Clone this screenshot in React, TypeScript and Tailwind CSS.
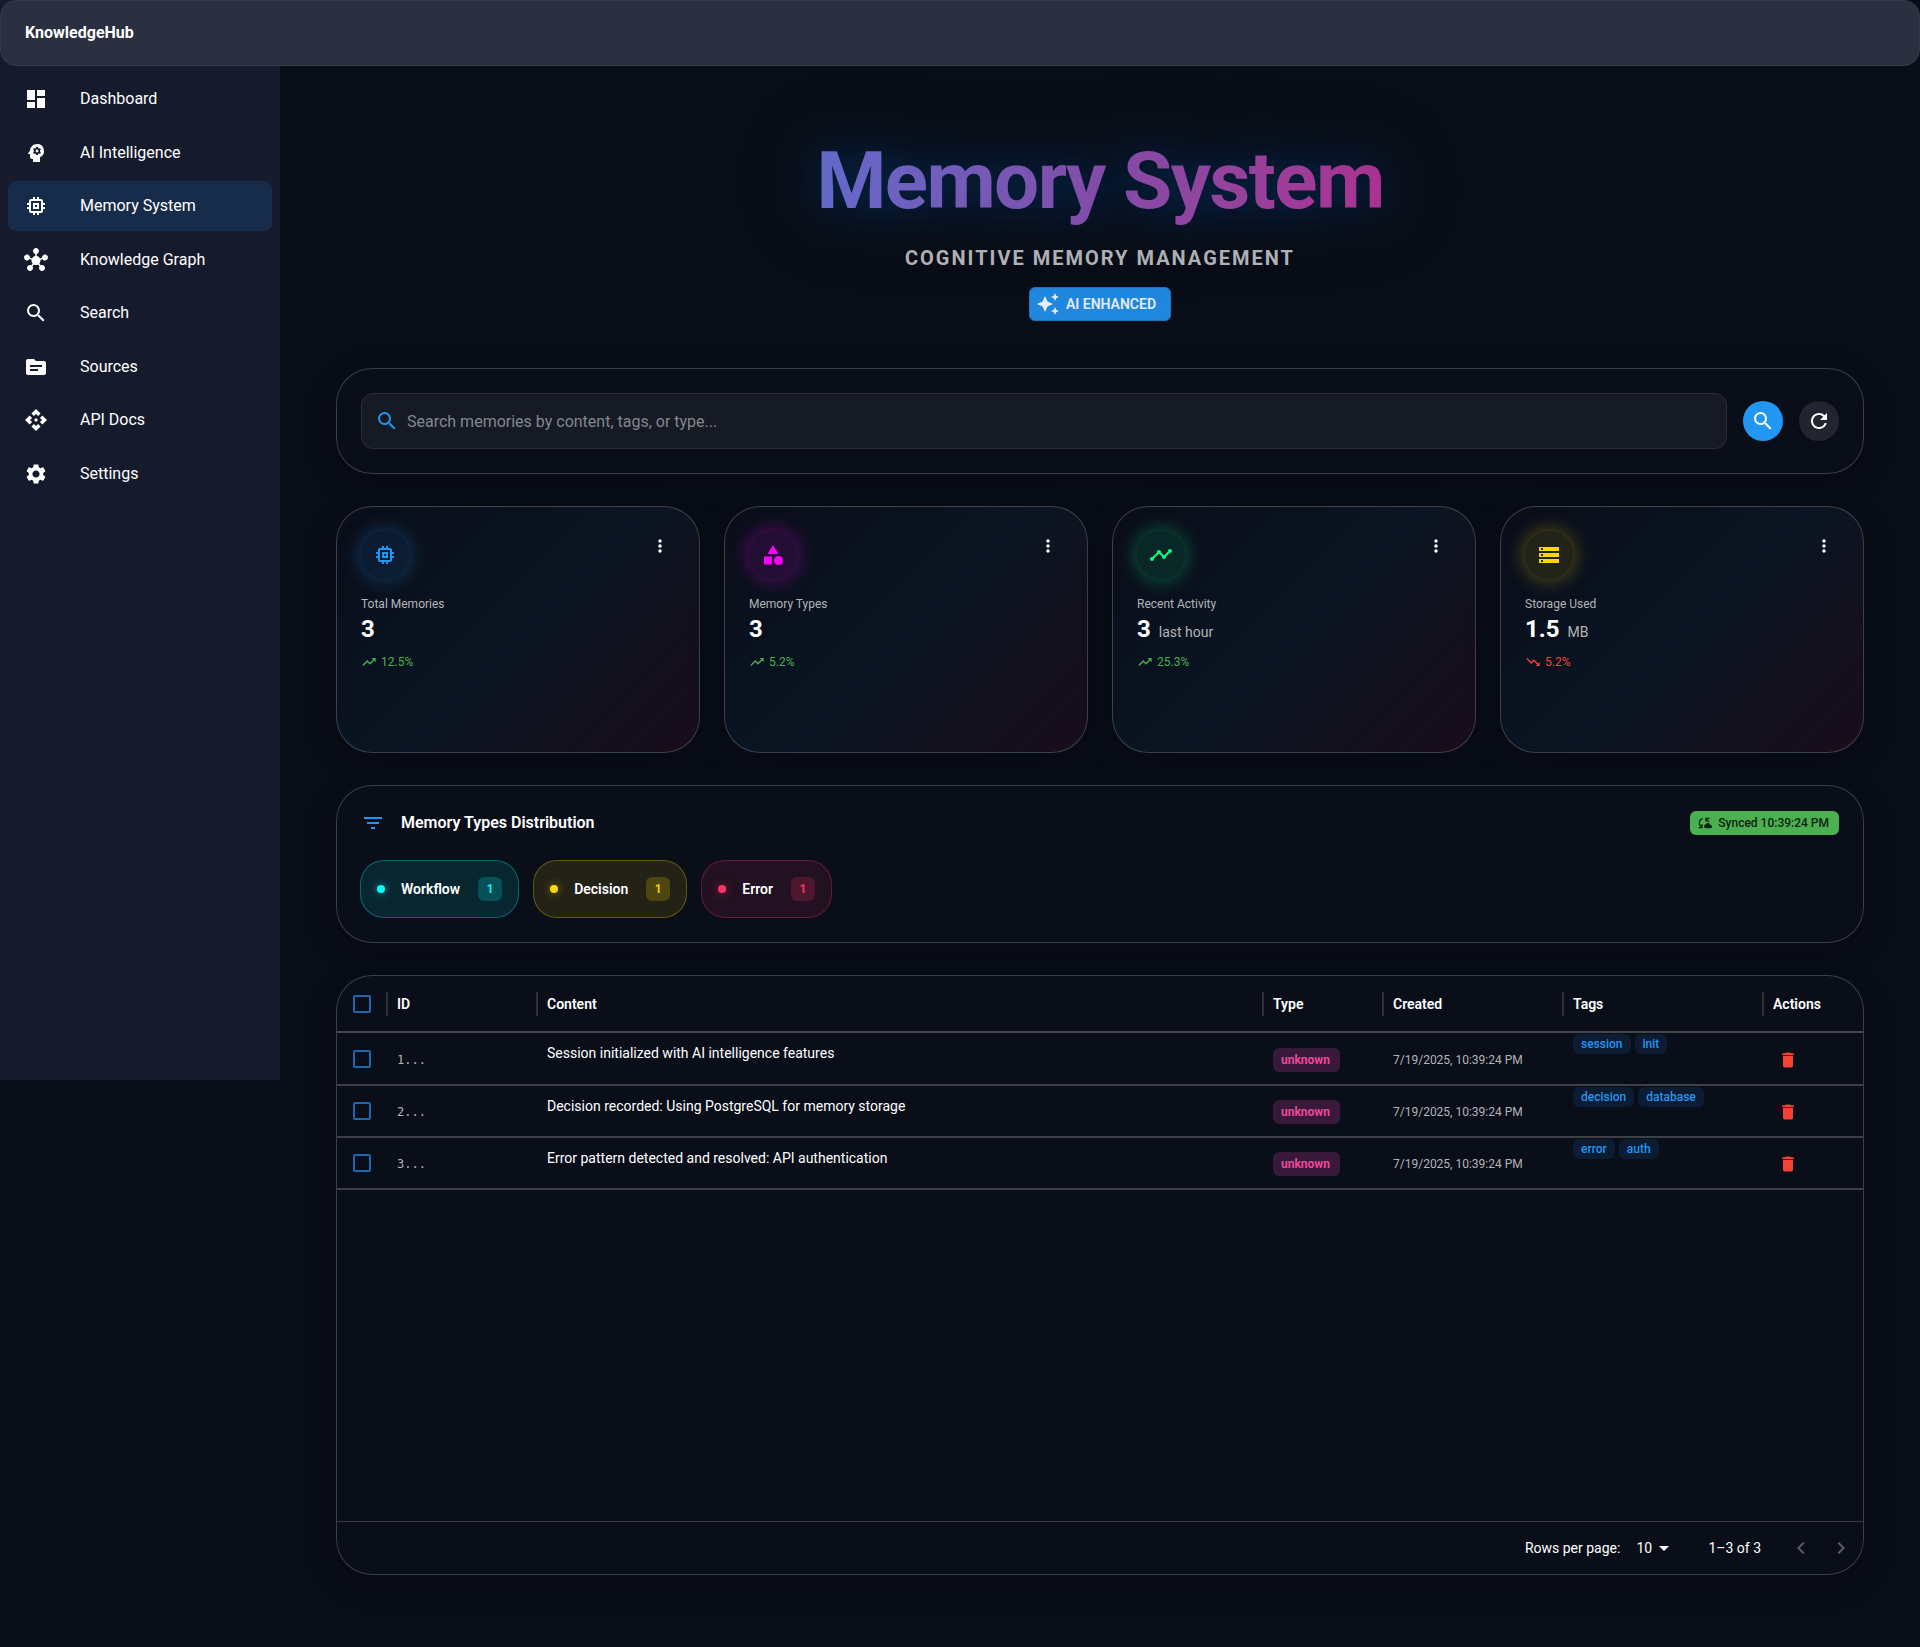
import React from "react";
import {
  MdApi,
  MdArrowDropDown,
  MdAutoAwesome,
  MdCategory,
  MdCloudSync,
  MdDashboard,
  MdDelete,
  MdFilterList,
  MdHub,
  MdKeyboardArrowLeft,
  MdKeyboardArrowRight,
  MdMemory,
  MdMoreVert,
  MdPsychology,
  MdRefresh,
  MdSearch,
  MdSettings,
  MdSource,
  MdStorage,
  MdTimeline,
  MdTrendingDown,
  MdTrendingUp,
} from "react-icons/md";

const navItems = [
  { label: "Dashboard", Icon: MdDashboard },
  { label: "AI Intelligence", Icon: MdPsychology },
  { label: "Memory System", Icon: MdMemory, active: true },
  { label: "Knowledge Graph", Icon: MdHub },
  { label: "Search", Icon: MdSearch },
  { label: "Sources", Icon: MdSource },
  { label: "API Docs", Icon: MdApi },
  { label: "Settings", Icon: MdSettings },
];

const stats = [
  {
    label: "Total Memories",
    value: "3",
    unit: "",
    trend: "12.5%",
    up: true,
    Icon: MdMemory,
    tone: "text-[#2196f3] bg-[#2196f3]/10 shadow-[0_0_20px_rgba(33,150,243,0.38)]",
  },
  {
    label: "Memory Types",
    value: "3",
    unit: "",
    trend: "5.2%",
    up: true,
    Icon: MdCategory,
    tone: "text-[#ff00ff] bg-[#ff00ff]/10 shadow-[0_0_20px_rgba(255,0,255,0.38)]",
  },
  {
    label: "Recent Activity",
    value: "3",
    unit: "last hour",
    trend: "25.3%",
    up: true,
    Icon: MdTimeline,
    tone: "text-[#00ff88] bg-[#00ff88]/10 shadow-[0_0_20px_rgba(0,255,136,0.38)]",
  },
  {
    label: "Storage Used",
    value: "1.5",
    unit: "MB",
    trend: "5.2%",
    up: false,
    Icon: MdStorage,
    tone: "text-[#ffd700] bg-[#ffd700]/10 shadow-[0_0_20px_rgba(255,215,0,0.38)]",
  },
];

const memoryTypes = [
  {
    label: "Workflow",
    count: 1,
    pill: "border-[#00ffff]/30 bg-[#00ffff]/10",
    dot: "bg-[#00ffff] shadow-[0_0_10px_rgba(0,255,255,0.5)]",
    badge: "bg-[#00ffff]/20 text-[#00ffff]",
  },
  {
    label: "Decision",
    count: 1,
    pill: "border-[#ffd700]/30 bg-[#ffd700]/10",
    dot: "bg-[#ffd700] shadow-[0_0_10px_rgba(255,215,0,0.5)]",
    badge: "bg-[#ffd700]/20 text-[#ffd700]",
  },
  {
    label: "Error",
    count: 1,
    pill: "border-[#ff3366]/30 bg-[#ff3366]/10",
    dot: "bg-[#ff3366] shadow-[0_0_10px_rgba(255,51,102,0.5)]",
    badge: "bg-[#ff3366]/20 text-[#ff3366]",
  },
];

const rows = [
  { id: "1...", content: "Session initialized with AI intelligence features", tags: ["session", "init"] },
  { id: "2...", content: "Decision recorded: Using PostgreSQL for memory storage", tags: ["decision", "database"] },
  { id: "3...", content: "Error pattern detected and resolved: API authentication", tags: ["error", "auth"] },
];

const columns = ["ID", "Content", "Type", "Created", "Tags", "Actions"];

const panel =
  "rounded-[36px] border border-white/20 bg-[#090e19] shadow-[0_8px_32px_rgba(0,0,0,0.2)]";

function CheckBox({ label }: { label: string }) {
  return (
    <input
      type="checkbox"
      aria-label={label}
      className="block size-[18px] appearance-none rounded-[2px] border-2 border-[#1b68ac] checked:bg-[#2196f3]"
    />
  );
}

function Header() {
  return (
    <header className="relative z-10 flex h-[66px] items-center rounded-2xl border border-[#343a49] bg-[#2a303f] px-6">
      <span className="text-base font-bold text-white">KnowledgeHub</span>
    </header>
  );
}

function Sidebar() {
  return (
    <aside className="-mt-[66px] h-[1080px] w-[280px] shrink-0 bg-[#151b2c] pt-[66px]">
      <nav aria-label="Main" className="px-2 py-2">
        <ul className="flex h-[425px] flex-col justify-between">
          {navItems.map(({ label, Icon, active }) => (
            <li key={label}>
              <a
                href="#"
                aria-current={active ? "page" : undefined}
                className={
                  active
                    ? "flex h-[50px] items-center gap-8 rounded-lg bg-[#172b4a] px-4"
                    : "flex h-[50px] items-center gap-8 rounded-lg px-4"
                }
              >
                <Icon className="size-6 shrink-0" />
                <span className="text-base">{label}</span>
              </a>
            </li>
          ))}
        </ul>
      </nav>
    </aside>
  );
}

function Hero() {
  return (
    <div className="mb-[47px] flex flex-col items-center gap-[13px]">
      <h1 className="bg-linear-to-r from-[#6269ca] via-[#814ca8] to-[#aa3190] bg-clip-text text-[80px] leading-[96px] font-bold tracking-[-0.02em] text-transparent [filter:drop-shadow(0_0_24px_rgba(0,100,190,0.45))_drop-shadow(0_0_30px_rgba(0,10,30,0.5))]">
        Memory System
      </h1>
      <p className="text-xl leading-8 font-bold tracking-widest text-[#b3b5b9] uppercase">
        Cognitive Memory Management
      </p>
      <span className="flex h-[34px] items-center gap-1.5 rounded-md border border-[#1a73bd] bg-[#1f88de] pr-3.5 pl-1.5 text-sm font-semibold text-[#e6eaf0]">
        <MdAutoAwesome className="size-6" />
        AI ENHANCED
      </span>
    </div>
  );
}

function SearchPanel() {
  return (
    <form className={`${panel} mb-8 flex items-center gap-4 p-6`} onSubmit={(e) => e.preventDefault()}>
      <label className="flex h-14 flex-1 items-center gap-2 rounded-xl border border-[#2a2d38] bg-[#161a25] px-[13px]">
        <MdSearch className="size-6 shrink-0 text-[#2196f3]" />
        <input
          type="text"
          aria-label="Search memories"
          placeholder="Search memories by content, tags, or type..."
          className="h-full w-full bg-transparent text-base text-white outline-none placeholder:text-[#84878d]"
        />
      </label>
      <button type="submit" aria-label="Search" className="grid size-10 place-items-center rounded-full bg-[#2196f3]">
        <MdSearch className="size-6" />
      </button>
      <button type="button" aria-label="Refresh" className="grid size-10 place-items-center rounded-full bg-[#222530]">
        <MdRefresh className="size-6" />
      </button>
    </form>
  );
}

function StatCards() {
  return (
    <section className="mb-8 grid grid-cols-4 gap-6">
      {stats.map(({ label, value, unit, trend, up, Icon, tone }) => (
        <article
          key={label}
          className="min-h-[247px] rounded-[36px] border border-white/20 bg-linear-135 from-[#0a0d19] via-[#0a1523] to-[#180c1a] p-6 shadow-[0_8px_32px_rgba(0,0,0,0.2)]"
        >
          <div className="mb-4 flex items-start justify-between">
            <div className={`grid size-12 place-items-center rounded-full ${tone}`}>
              <Icon className="size-6" />
            </div>
            <button type="button" aria-label={`${label} options`} className="p-[5px]">
              <MdMoreVert className="size-5" />
            </button>
          </div>
          <p className="text-xs leading-[18px] text-[#b3b5b9]">{label}</p>
          <p className="flex items-baseline gap-2 text-2xl leading-8 font-bold">
            {value}
            {unit && <span className="text-sm font-normal text-[#b3b5b9]">{unit}</span>}
          </p>
          <p
            className={
              up
                ? "mt-2 flex items-center gap-1 text-xs leading-[18px] text-[#4caf50]"
                : "mt-2 flex items-center gap-1 text-xs leading-[18px] text-[#f44336]"
            }
          >
            {up ? <MdTrendingUp className="size-4" /> : <MdTrendingDown className="size-4" />}
            {trend}
          </p>
        </article>
      ))}
    </section>
  );
}

function Distribution() {
  return (
    <section className={`${panel} mb-8 p-6`}>
      <div className="mb-6 flex h-[26px] items-center justify-between">
        <h2 className="flex items-center gap-4 text-base font-semibold">
          <MdFilterList className="size-6 text-[#2196f3]" />
          Memory Types Distribution
        </h2>
        <span className="flex h-6 items-center gap-1.5 rounded-md bg-[#4caf50] pr-2.5 pl-1.5 text-xs font-medium text-[#0f2412]">
          <MdCloudSync className="size-4" />
          Synced 10:39:24 PM
        </span>
      </div>
      <ul className="-ml-px flex gap-3.5">
        {memoryTypes.map(({ label, count, pill, dot, badge }) => (
          <li key={label} className={`flex h-[58px] items-center gap-4 rounded-3xl border px-4 ${pill}`}>
            <span className={`size-2 rounded-full ${dot}`} />
            <span className="text-sm font-semibold">{label}</span>
            <span className={`ml-0.5 grid h-6 w-6 place-items-center rounded-md text-xs font-semibold ${badge}`}>
              {count}
            </span>
          </li>
        ))}
      </ul>
    </section>
  );
}

function MemoryTable() {
  return (
    <section className={`${panel} flex min-h-[600px] flex-col overflow-hidden`}>
      <table className="w-full table-fixed border-separate border-spacing-0 text-left text-sm">
        <colgroup>
          <col className="w-[50px]" />
          <col className="w-[150px]" />
          <col />
          <col className="w-[120px]" />
          <col className="w-[180px]" />
          <col className="w-[200px]" />
          <col className="w-[100px]" />
        </colgroup>
        <thead>
          <tr className="h-[57px]">
            <th className="border-b-2 border-[#45474c] py-0 pl-4">
              <CheckBox label="Select all rows" />
            </th>
            {columns.map((name) => (
              <th key={name} className="border-b-2 border-[#45474c] p-0 font-semibold">
                <span className="-ml-px flex h-6 items-center border-l-2 border-[#303135] pl-[9px]">{name}</span>
              </th>
            ))}
          </tr>
        </thead>
        <tbody className="[&_td]:border-b-2 [&_td]:border-[#3e4045]">
          {rows.map(({ id, content, tags }) => (
            <tr key={id} className="h-[52px] first:h-[53px]">
              <td className="py-0 pl-4">
                <CheckBox label={`Select row ${id}`} />
              </td>
              <td className="px-2.5 pt-0.5 pb-0 font-['DejaVu_Sans_Mono',monospace] text-xs text-[#b3b5b9]">{id}</td>
              <td className="truncate px-2.5 pt-2.5 pb-0 align-top leading-5">{content}</td>
              <td className="px-2.5 pt-0.5 pb-0">
                <span className="flex h-6 w-fit items-center rounded-md bg-[#38193a] pr-2.5 pl-2 text-xs font-bold text-[#ec4899]">
                  unknown
                </span>
              </td>
              <td className="px-2.5 pt-0.5 pb-0 text-xs text-[#b3b5b9]">7/19/2025, 10:39:24 PM</td>
              <td className="px-2.5 pt-px pb-0 align-top">
                <div className="flex gap-1">
                  {tags.map((tag) => (
                    <span
                      key={tag}
                      className="flex h-5 items-center rounded-md bg-[#0c1c33] px-2 text-xs font-medium text-[#2196f3]"
                    >
                      {tag}
                    </span>
                  ))}
                </div>
              </td>
              <td className="px-2.5 pt-0.5 pb-0">
                <button type="button" aria-label={`Delete memory ${id}`} className="block p-[5px] text-[#f44336]">
                  <MdDelete className="size-5" />
                </button>
              </td>
            </tr>
          ))}
        </tbody>
      </table>
      <footer className="mt-auto flex h-[53px] items-center justify-end border-t border-[#393c45] pr-0.5 text-sm">
        <label htmlFor="page-size">Rows per page:</label>
        <span className="relative ml-4 flex items-center">
          <select id="page-size" defaultValue="10" className="w-10 appearance-none bg-transparent outline-none">
            <option value="10">10</option>
            <option value="25">25</option>
            <option value="50">50</option>
          </select>
          <MdArrowDropDown className="pointer-events-none absolute right-0 size-6" />
        </span>
        <span className="ml-8">1–3 of 3</span>
        <div className="ml-5 flex text-[#5a5d64]">
          <button type="button" aria-label="Previous page" disabled className="p-2">
            <MdKeyboardArrowLeft className="size-6" />
          </button>
          <button type="button" aria-label="Next page" disabled className="p-2">
            <MdKeyboardArrowRight className="size-6" />
          </button>
        </div>
      </footer>
    </section>
  );
}

export default function App() {
  return (
    <div className="min-h-screen bg-[#090d17] font-[Roboto,sans-serif] text-white">
      <Header />
      <div className="flex items-start">
        <Sidebar />
        <main className="min-w-0 flex-1 px-14 pt-[67px] pb-[72px]">
          <Hero />
          <SearchPanel />
          <StatCards />
          <Distribution />
          <MemoryTable />
        </main>
      </div>
    </div>
  );
}
